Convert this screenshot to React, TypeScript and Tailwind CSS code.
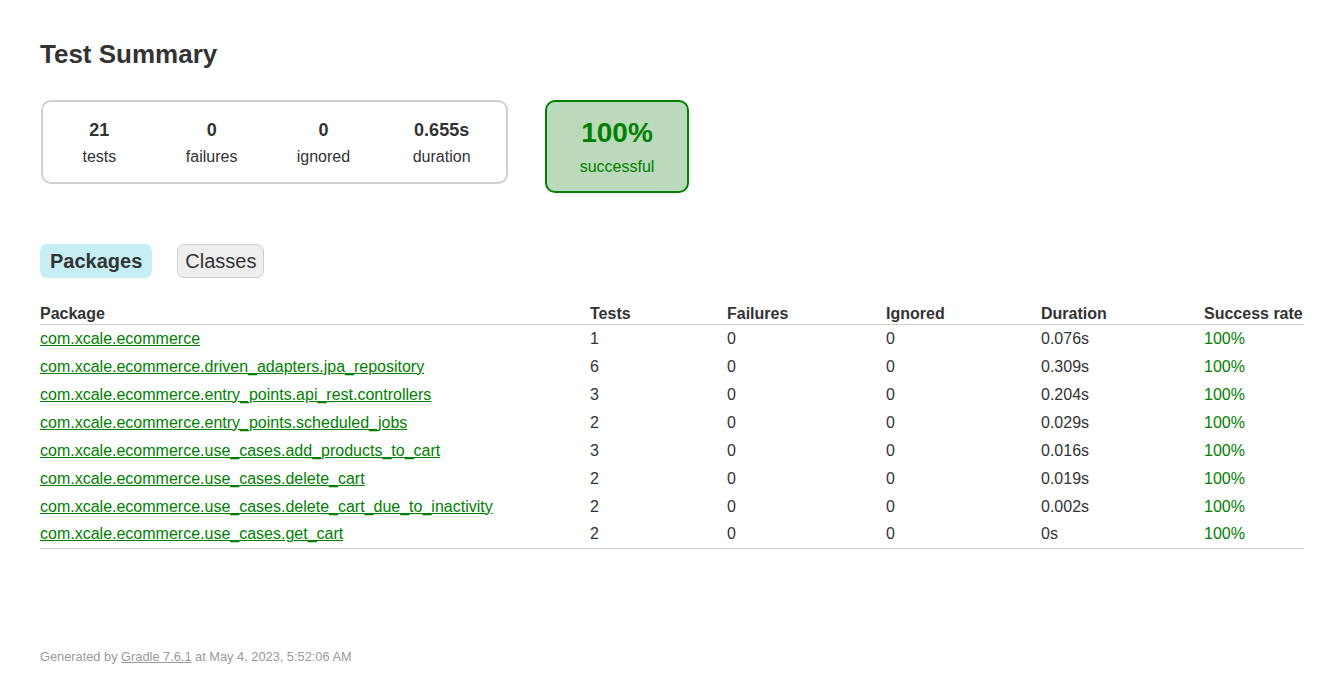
import React from 'react';

interface PackageRow {
  name: string;
  tests: number;
  failures: number;
  ignored: number;
  duration: string;
}

const packages: PackageRow[] = [
  { name: 'com.xcale.ecommerce', tests: 1, failures: 0, ignored: 0, duration: '0.076s' },
  { name: 'com.xcale.ecommerce.driven_adapters.jpa_repository', tests: 6, failures: 0, ignored: 0, duration: '0.309s' },
  { name: 'com.xcale.ecommerce.entry_points.api_rest.controllers', tests: 3, failures: 0, ignored: 0, duration: '0.204s' },
  { name: 'com.xcale.ecommerce.entry_points.scheduled_jobs', tests: 2, failures: 0, ignored: 0, duration: '0.029s' },
  { name: 'com.xcale.ecommerce.use_cases.add_products_to_cart', tests: 3, failures: 0, ignored: 0, duration: '0.016s' },
  { name: 'com.xcale.ecommerce.use_cases.delete_cart', tests: 2, failures: 0, ignored: 0, duration: '0.019s' },
  { name: 'com.xcale.ecommerce.use_cases.delete_cart_due_to_inactivity', tests: 2, failures: 0, ignored: 0, duration: '0.002s' },
  { name: 'com.xcale.ecommerce.use_cases.get_cart', tests: 2, failures: 0, ignored: 0, duration: '0s' },
];

const stats = [
  { value: '21', label: 'tests', w: 'w-[111px]' },
  { value: '0', label: 'failures', w: 'w-[114px]' },
  { value: '0', label: 'ignored', w: 'w-[110px]' },
  { value: '0.655s', label: 'duration', w: 'w-[127px]' },
];

const App: React.FC = () => {
  return (
    <div className="min-h-[687px] bg-white px-10 pt-[38px] font-['Liberation_Sans',Arial,sans-serif] text-[#333]">
      <h1 className="text-[26px] font-bold leading-8">Test Summary</h1>

      {/* Summary */}
      <div className="mt-[30px] flex items-start">
        <div className="ml-px flex h-[84px] w-[467px] rounded-[10px] border-2 border-[#d0d0d0] px-px">
          {stats.map(s => (
            <div key={s.label} className={`${s.w} flex flex-col items-center pt-[16px]`}>
              <div className="text-[18px] font-bold leading-6">{s.value}</div>
              <div className="mt-[5px] text-[16px] leading-5">{s.label}</div>
            </div>
          ))}
        </div>
        <div className="ml-[37px] flex h-[93px] w-[144px] flex-col items-center rounded-[10px] border-2 border-[#008000] bg-[#bbd9bb] pt-[15px] text-[#008000]">
          <div className="text-[28px] font-bold leading-8">100%</div>
          <div className="mt-[8px] text-[16px] leading-5">successful</div>
        </div>
      </div>

      {/* Tabs */}
      <div className="mt-[51px] flex gap-[25px]">
        <div className="flex h-[34px] items-center rounded-[7px] bg-[#c5eef5] px-[10px] text-[20px] font-bold">Packages</div>
        <div className="flex h-[34px] items-center rounded-[7px] border border-[#cfcfcf] bg-[#eee] px-[7px] text-[20px]">Classes</div>
      </div>

      {/* Package table */}
      <table className="mt-[26px] w-[1264px] table-fixed border-collapse text-left text-[16px]">
        <colgroup>
          <col className="w-[550px]" />
          <col className="w-[137px]" />
          <col className="w-[159px]" />
          <col className="w-[155px]" />
          <col className="w-[163px]" />
          <col className="w-[100px]" />
        </colgroup>
        <thead>
          <tr className="border-b border-[#d0d0d0] leading-5">
            <th className="p-0 font-bold">Package</th>
            <th className="p-0 font-bold">Tests</th>
            <th className="p-0 font-bold">Failures</th>
            <th className="p-0 font-bold">Ignored</th>
            <th className="p-0 font-bold">Duration</th>
            <th className="p-0 font-bold whitespace-nowrap">Success rate</th>
          </tr>
        </thead>
        <tbody className="border-b border-[#d0d0d0]">
          {packages.map(p => (
            <tr key={p.name} className="h-[28px]">
              <td>
                <a href="#" className="text-[#008000] underline">{p.name}</a>
              </td>
              <td>{p.tests}</td>
              <td>{p.failures}</td>
              <td>{p.ignored}</td>
              <td>{p.duration}</td>
              <td className="text-[#008000]">100%</td>
            </tr>
          ))}
        </tbody>
      </table>

      {/* Footer */}
      <div className="mt-[98px] text-[12.8px] text-[#999]">
        Generated by <a href="#" className="text-[#999] underline">Gradle 7.6.1</a> at May 4, 2023, 5:52:06 AM
      </div>
    </div>
  );
};

export default App;
